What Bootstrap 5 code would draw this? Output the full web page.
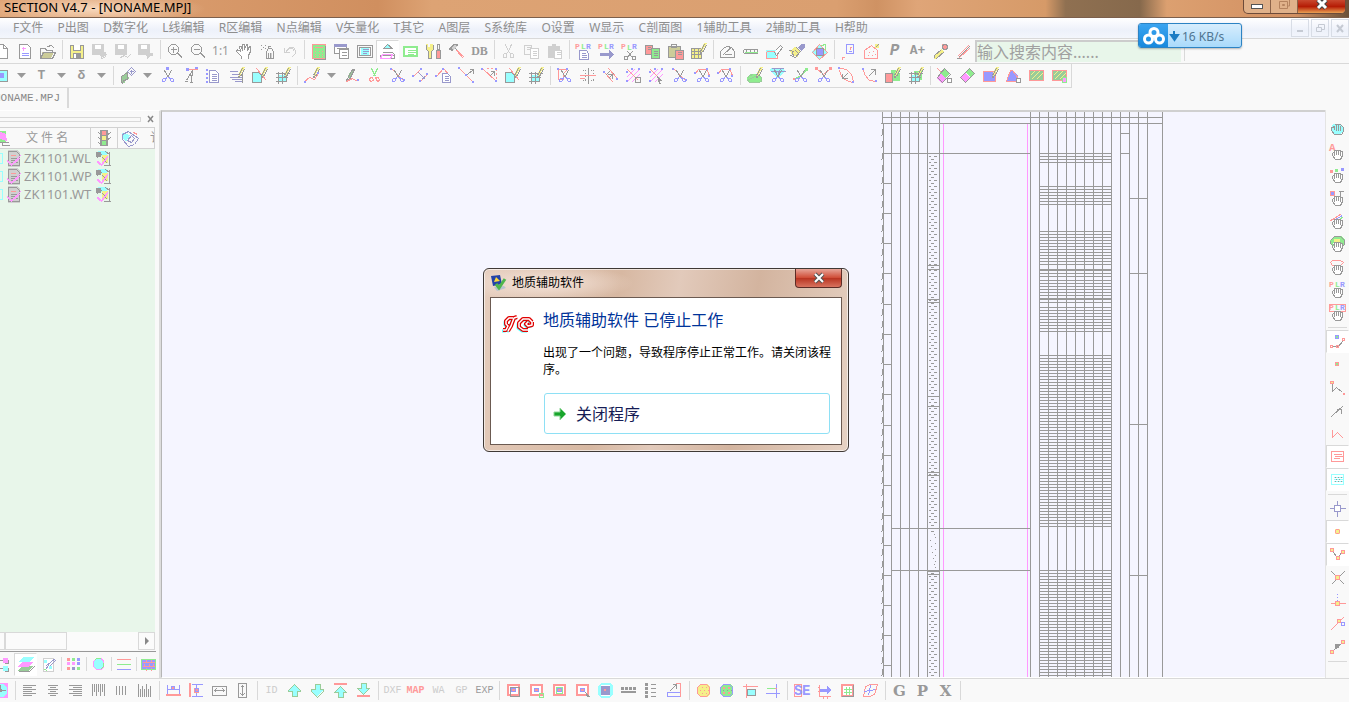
<!DOCTYPE html>
<html lang="zh-CN">
<head>
<meta charset="utf-8">
<meta name="viewport" content="width=device-width, initial-scale=1">
<title>SECTION V4.7 - [NONAME.MPJ]</title>
<link href="https://cdn.jsdelivr.net/npm/bootstrap@5.3.0/dist/css/bootstrap.min.css" rel="stylesheet">
<style>
:root{--line:#d9d9d9;--ink:#999;--face:#f9f9f9;--mint:#e8f6ea;--sheet:#f5f5ff}
body{font:12px/18px "Noto Sans","Noto Sans CJK SC",sans-serif;background:var(--face);color:var(--ink)}
button,input{font:inherit;color:inherit;border-radius:0}
button{border:0;background:none;padding:0}
.titlebar{height:18px;color:#000;border-bottom:1px solid #7c5f4c;
 background:radial-gradient(ellipse 110px 16px at 96px 9px,#ffe6cfcc,#ffe6cf00),linear-gradient(90deg,#e0a577,#d08f5f 28%,#dda374 32%,#da9f70 62%,#cf9263 65%,#dfa578 68%,#d69a68 77.5%,#8f7051 79%,#86694c 84.5%,#dca070 86.5%,#d29062 96%,#6b5139)}
.titlebar .caption{font-size:13px;line-height:14px;padding-left:4px}
.win-btns{height:14px;border:1px solid #6d4b3a;border-top:0;border-radius:0 0 5px 5px;overflow:hidden;margin-right:3px;background:#e0b18a}
.win-btns button{width:27px;display:flex;justify-content:center;border-right:1px solid #8c6349}
.win-btns .shut{width:47px;border:0;background:linear-gradient(#c9492f,#b51c05 50%,#e9a053)}
.menubar{height:20px;background:linear-gradient(#fff,#edf1fa 60%,#f3f6fc)}
.menubar .menu{width:868px;padding-left:13px;line-height:20px}
.menubar a{color:#8e8e8e;text-decoration:none;white-space:nowrap}
.child-btns{gap:2px}
.child-btns button{width:18px;height:18px;border:1px solid #d8dde6;display:flex;align-items:center;justify-content:center}
.strip{display:flex;align-items:center;height:24px;white-space:nowrap}
.strip-tall{height:25px}
.rule-top{border-top:1px solid var(--line)}
.pull{margin-left:-10px}
.tool{width:23px;height:23px;flex:none;display:flex;align-items:center;justify-content:center;line-height:20px}
.tool svg{overflow:visible}
.tool.on{background:#fff;border:1px solid var(--line);border-right-color:#fff;border-bottom-color:#fff}
.drop-arrow{width:17px;height:23px;flex:none;display:flex;align-items:center;justify-content:center}
.gap-bar{width:6px;height:19px;flex:none;background:linear-gradient(var(--line),var(--line)) center/1px 100% no-repeat}
.side .gap-bar{width:19px;height:6px;background:linear-gradient(var(--line),var(--line)) center/100% 1px no-repeat}
.t-serif{font:bold 12px/20px "Liberation Serif",serif}
.t-big{font:bold 15px/20px "DejaVu Serif",serif}
.t-mono{font:bold 13px/20px "Liberation Mono",monospace}
.t-slant{font:italic bold 16px/20px "Liberation Mono",monospace}
.t-tiny{font:10px/20px "Liberation Mono",monospace}
.t-faint{color:#ccc}.t-rose{color:#f99;font-weight:bold}
.finder{width:206px;height:22px;border:1px solid #ccc;border-width:2px 0 0 2px;background:var(--mint);font-size:16px;padding:0;outline:0}
.finder::placeholder{color:#a0a0a0;opacity:1}
.row-two{width:1082px;border-bottom:1px solid var(--line);border-right:1px solid var(--line)}
.tab-row{height:22px}
.doc-tab{font:11px/21px "Liberation Mono",monospace;height:20px;border-right:2px solid var(--line);padding-right:7px;margin-left:-6px;color:#888}
.files{width:161px;border-top:1px solid #fff;border-right:2px solid #ddd}
.files-head{height:16px;width:156px}
.grip{width:141px;height:5px;border:1px solid var(--line);border-left:0}
.file-grid{table-layout:fixed;width:155px;margin:0;border-collapse:collapse}
.file-grid th{height:21px;padding:0;border:1px solid #d2d2d2;border-left:0;font-weight:400;overflow:hidden;text-align:center}
.file-grid td{height:18px;padding:0;white-space:nowrap;overflow:hidden}
.file-name{width:72px;font-size:13px;padding-left:1px}
.row-flag{width:3px;height:11px;border:1px solid #9ff;border-left:0;margin-right:3px}
.file-list{background:var(--mint);width:155px}
.hbar{height:18px;width:155px;background:#fbfbfb}
.hbar .thumb{width:62px;border:1px solid var(--line)}
.hbar .start{width:5px;border:1px solid var(--line);border-left:0}
.hbar button{width:17px;border:1px solid var(--line);display:flex;align-items:center;justify-content:center}
.pane-tabs{height:25px;border-top:1px solid var(--ink);margin:1px 3px 2px -9px}
.pane-tabs .gap-bar{width:2px;height:14px}
.sheet{background:var(--sheet);border-top:2px solid #d0d0d0;border-left:1px solid #b5b5b5;border-bottom:1px solid #fff}
.sheet svg{width:290px;height:567px;margin-right:155px;flex:none}
.side{width:24px;padding:7px 1px 0 0;border-left:1px solid #e4e4e4}
.net-pill{left:1138px;top:23px;width:104px;height:25px;border:1px solid #2c83c4;border-radius:3px;background:linear-gradient(#d7edfd,#a9dafb);color:#4f7591;box-shadow:0 1px 2px #0004;overflow:hidden;line-height:26px}
.net-pill .mark-box{width:29px;background:linear-gradient(#3ba4f0,#1789dd)}
.crash{left:483px;top:268px;width:366px;border:1px solid #3f3936;border-radius:6px;padding:0 6px 6px;color:#000;box-shadow:inset 0 0 0 1px #fff9;
 background:radial-gradient(ellipse 90px 18px at 60px 14px,#f5e4da,#f5e4da00),linear-gradient(100deg,#e5cdbd,#d7b8a2 35%,#e2cabb 50%,#d3b49f 70%,#e6d2c4)}
.crash header{height:28px;padding-left:1px}
.crash .shut{width:47px;height:19px;border:1px solid #5c2c26;border-top:0;border-radius:0 0 4px 4px;background:linear-gradient(#e7a598,#cf4a34 50%,#b93522 52%,#d8735f);display:flex;align-items:center;justify-content:center}
.crash .inner{background:#fff;border:1px solid #6b5a51;height:148px;padding:10px 8px 0 10px}
.crash h1{font-size:16px;line-height:24px;color:#039;margin:0 0 12px}
.crash p{line-height:17px;margin:0 0 15px}
.crash .answer{height:41px;width:286px;border:1px solid #8ee0f5;border-radius:3px;font-size:16px;color:#151c55;gap:8px;padding-left:7px;margin-left:1px}
</style>
</head>
<body class="vh-100 d-flex flex-column overflow-hidden position-relative">

<header class="titlebar d-flex justify-content-between flex-shrink-0">
  <div class="caption">SECTION V4.7 - [NONAME.MPJ]</div>
  <div class="win-btns d-flex">
    <button aria-label="最小化"><svg width="14" height="11"><rect x="1.500" y="4.500" width="11" height="4" fill="#fff" stroke="#555"/></svg></button>
    <button aria-label="还原"><svg width="12" height="11"><path d="M3.500 0v-2h8v8h-2M1.500 1.500h8v7h-8zM4.500 4.500h2v1h-2z" fill="none" stroke="#b5835f"/></svg></button>
    <button class="shut" aria-label="关闭"><svg width="14" height="11"><path d="M3 0l8 8M11 0L3 8" stroke="#444" stroke-width="5"/><path d="M3 0l8 8M11 0L3 8" stroke="#fff" stroke-width="3"/></svg></button>
  </div>
</header>

<nav class="menubar d-flex flex-shrink-0 align-items-center justify-content-between">
  <div class="menu d-flex justify-content-between">
    <a href="#">F文件</a><a href="#">P出图</a><a href="#">D数字化</a><a href="#">L线编辑</a><a href="#">R区编辑</a><a href="#">N点编辑</a><a href="#">V矢量化</a><a href="#">T其它</a><a href="#">A图层</a><a href="#">S系统库</a><a href="#">O设置</a><a href="#">W显示</a><a href="#">C剖面图</a><a href="#">1辅助工具</a><a href="#">2辅助工具</a><a href="#">H帮助</a>
  </div>
  <div class="child-btns d-flex">
    <button aria-label="最小化子窗口"><svg width="9" height="9"><path d="M1 7h6" stroke="#c5cad3" stroke-width="2"/></svg></button>
    <button aria-label="还原子窗口"><svg width="9" height="9"><path d="M2.500 3V.5h6v5H6M.5 3.500h5v4h-5z" fill="none" stroke="#c5cad3"/></svg></button>
    <button aria-label="关闭子窗口"><svg width="9" height="9"><path d="M1 1l6 7M7 1L1 8" stroke="#c5cad3" stroke-width="2"/></svg></button>
  </div>
</nav>

<div class="strip strip-tall rule-top flex-shrink-0">
  <div class="d-flex pull" data-tools="new page open | save saveA saveB saveC | zin zout #t-fit:1:1 hand spray undo | calc wins screen !picture card tools hammer #t-big2:DB | cut copy paste | plrpage plrarrow plrcut copyc pastec gridpen | prot ruler eraser brush diamond | pt house #t-slant:P #t-mono:A+ pin pen"></div>
  <input class="finder" type="text" aria-label="搜索" placeholder="输入搜索内容......">
  <span class="gap-bar"></span>
</div>
<div class="rule-top flex-shrink-0">
  <div class="strip row-two pull" data-tools="sq v #t-mono:T v #t-mono:δ v | leaf v nodecut nodeline list textpen mappen netpen | curve v pen2 cutg cutline linea linepage linex liney mappen netpen | polycut mirror ladder hatch1 hatch2 cutline cutarc cutarc | blob gem cuty cutv arc1 arrowl blobpen netg | dia1 dia2 rectpen trisq hat hatsel"></div>
</div>
<div class="tab-row d-flex flex-shrink-0"><div class="doc-tab">NONAME.MPJ</div></div>

<main class="d-flex flex-grow-1" style="min-height:0">
  <aside class="files d-flex flex-column flex-shrink-0">
    <div class="files-head d-flex align-items-center justify-content-between">
      <div class="grip"></div>
      <button aria-label="关闭面板"><svg class="d-block" width="9" height="8"><path d="M1 1l5 6M6 1L1 7" stroke="#888" stroke-width="1.500"/></svg></button>
    </div>
    <div class="file-list d-flex flex-column flex-grow-1">
      <table class="file-grid">
        <colgroup><col style="width:90px"><col style="width:27px"><col></colgroup>
        <thead style="background:var(--face)"><tr>
          <th><div class="d-flex" style="margin-left:-5px"><span data-icon="layer"></span><span style="padding-left:14px">文 件 名</span></div></th>
          <th><span data-icon="light"></span></th>
          <th><div class="d-flex justify-content-between ps-1"><span data-icon="disk"></span><span style="width:4px;overflow:hidden">讠</span></div></th>
        </tr></thead>
        <tbody id="rows"></tbody>
      </table>
    </div>
    <div class="hbar d-flex">
      <span class="start"></span><span class="thumb me-auto"></span>
      <button aria-label="向右滚动"><svg width="6" height="8"><path d="M1 0l4 4-4 4z" fill="#888"/></svg></button>
    </div>
    <div class="pane-tabs d-flex align-items-center" data-tools="tree !stack note | colors | circ | lines3 | brick"></div>
  </aside>
  <section class="sheet d-flex flex-grow-1 justify-content-end overflow-hidden">
    <svg id="column" viewBox="880 112 290 567" shape-rendering="crispEdges" role="img" aria-label="钻孔柱状图"></svg>
  </section>
  <nav class="side d-flex flex-column align-items-center flex-shrink-0 overflow-hidden" data-tools="grab grabA grabdots grabT grablines grabblob grabring grabplr grabplrbox | !snap1 dot zig arrow zig2 !txtbox !cybox | cross !ptdot !vee ex perp tang mid |"></nav>
</main>

<footer class="strip rule-top flex-shrink-0" style="margin-left:-11px" data-tools="mag | al ac ar bars1 bars2 bars3 | fitw fith stw sth | #t-tiny t-faint:ID up down top bottom | #t-tiny t-faint:DXF #t-tiny t-rose:MAP #t-tiny t-faint:WA #t-tiny t-faint:GP #t-tiny:EXP | b1 b2 b3 b4 b5 dashes rows tri | wheel1 wheel2 crop tee | se axis frame warp | #t-big:G #t-big:P #t-big:X |"></footer>

<div class="net-pill position-absolute d-flex">
  <div class="mark-box d-flex align-items-center justify-content-center"><svg width="22" height="18" fill="none" stroke="#fff" stroke-width="3"><circle cx="11" cy="5.500" r="4"/><circle cx="5.500" cy="12" r="4"/><circle cx="16.500" cy="12" r="4"/></svg></div>
  <svg width="14" height="23"><path d="M6 7v6M3 11h7l-3.500 5z" fill="#1a7cc4" stroke="#1a7cc4" stroke-width="2"/></svg><span>16 KB/s</span>
</div>

<div class="crash position-absolute" role="dialog" aria-labelledby="crash-name">
  <header class="d-flex justify-content-between">
    <div class="d-flex align-items-center gap-1">
      <svg width="17" height="16"><path d="M0 1l9-1 2 9-9 2z" fill="#2444a8"/><path d="M3 7l2-5 4 4z" fill="#ffd83d"/><path d="M3 12l10-1 2 2-9 3z" fill="#b7c3cf"/><path d="M5 9l3 4 6-9" fill="none" stroke="#4fb64d" stroke-width="3"/></svg>
      <span id="crash-name">地质辅助软件</span>
    </div>
    <button class="shut" aria-label="关闭对话框"><svg width="14" height="12"><path d="M3 2l8 8M11 2l-8 8" stroke="#555" stroke-width="4"/><path d="M3 2l8 8M11 2l-8 8" stroke="#fff" stroke-width="2"/></svg></button>
  </header>
  <div class="inner d-flex">
    <svg class="flex-shrink-0" width="34" height="34" fill="none" stroke-linejoin="round">
      <defs><path id="swirl" d="M12 10H8L5 13v3l2 2-2 4H2M16 9l-3 1-3 8-3 5M31 14l-3-3h-6l-4 4v4l4 3h5M31 14v3l-4 1-2-2 2-2"/></defs>
      <use href="#swirl" x="-1" y="1" stroke="#5ff" stroke-width="3"/>
      <use href="#swirl" stroke="#e00000" stroke-width="4"/>
      <use href="#swirl" stroke="#fff" stroke-width="1.500"/>
    </svg>
    <div class="ps-2">
      <h1 class="fw-normal">地质辅助软件 已停止工作</h1>
      <p>出现了一个问题，导致程序停止正常工作。请关闭该程序。</p>
      <button class="answer d-flex align-items-center"><svg width="16" height="16"><path d="M2 6h6V2l6 6-6 6v-4H2z" fill="#19a52c" stroke="#8fd797"/></svg>关闭程序</button>
    </div>
  </div>
</div>

<script src="https://cdn.jsdelivr.net/npm/bootstrap@5.3.0/dist/js/bootstrap.bundle.min.js"></script>
<script>
// Icon parts: mode (s stroke, f fill, t letter, @ include) + colour + path data on a 17px grid
const hue={k:'#999',r:'#f99',g:'#8fec8f',b:'#99f',c:'#9ff',m:'#f9f',y:'#f5f08a',l:'#d0d0d0',w:'#fff',n:'#99c',d:'#9c9',o:'#cc9'};
const icons={
sciss:'sk M5 3L9 10M12 3L8 10;sb M8 10l-2 1M9 10l2 1M4 11h2v2l-1 1h-2v-2zM11 11h2l1 1v2h-2l-1-1z',
penc:'fy M10 8l4-8h3l-5 9z;sk M10 8l4-7M12 9l4-7M10 8v2l2-1',
doc:'fw M4 3h7l3 3v9h-10z;sn M4 3h6l3 3v9h-9zM6 7h5M6 9h5M6 11h5M6 13h5',
palm:'fw M4 8h9v5l-2 4h-5z;sk M5 9v3M3 9h2M3 9v3l3 4h5l2-4V8h-2v4M5 11V7h2v4M7 7h2v4M9 7h2v4',
new:'fw M3 1h8l3 3v12h-11z;sk M3 1h7l4 4v10h-11zM10 1v4h4',
page:'fw M4 1h8l3 3v12h-11z;sk M3 1h8l3 3v11h-11z;sm M5 5h4M7 3v4;sb M5 10h7M5 12h7',
open:'fo M3 9h12l-3 6h-10z;sk M1 14V5h5l1 2h6v2M1 15l3-6h12l-3 6zM8 3l4-1 3 3',
save:'fy M2 2h13v13h-13z;sk M2 2h13v13h-13zM5 2v5h7V2;fw M6 2h6v5h-6z;fk M5 10h8v5h-8z;fw M6 11h2v4h-2z',
saveA:'fl M1 1h12v11h-12zM9 10l6-1 1 3-6 3z;fw M4 2h6v4h-6z;sl M10 15l5-2',
saveB:'fl M1 1h12v11h-12z;fw M4 2h6v4h-6z;sl M6 14l4-2 3 2 3-3',
saveC:'fl M1 1h12v11h-12zM9 10h7v3h-3l-3 3z;fw M4 2h6v4h-6z',
zin:'sk M5 1h4l3 3v4l-3 3h-4l-3-3V4zM4 6h6M7 3v6M11 10l5 5M12 10l4 4',
zout:'sk M5 1h4l3 3v4l-3 3h-4l-3-3V4zM4 6h6M11 10l5 5M12 10l4 4',
hand:'fw M3 8l2-6 8-1 2 5-2 6v4h-7z;sk M6 15v-2l-5-5 1-2 3 2-1-5h2l1 4V1h2v5l2-5h1v6l2-4h1v5l-2 4v3',
spray:'sk M8 8l2-3h3l2 3v7h-7zM10 5V3h2M2 2h1M4 4h1M2 6h1M6 2h1M6 5h1M10 9v5M12 9v5;sl M13 9v5',
undo:'sl M3 4v5h5M4 8l4-4h4l2 3v3l-4 4M4 9l4-4h3l2 3',
calc:'fg M2 1h13v15h-13z;sr M2 1h13v14h-13zM4 4h8M4 8h1M8 8h1M11 8h1M4 11h1M8 11h1M11 11h1M4 13h1M8 13h1M11 13h1;sk M15 2v14h-12',
wins:'fw M2 2h12v8h-12z;sk M1 1h12v9h-12zM3 5h12v8;fw M6 6h10v9h-10z;sk M6 6h9v9h-9zM8 9h5M8 12h5;fn M1 1h13v3h-13z',
screen:'sk M1 2h15v12h-15zM3 4h11v8h-11z;fc M5 5h8v7h-8z;sn M6 6h6M6 8h6M6 10h4',
picture:'fc M5 5l4-4 4 4z;sk M4 5l4-4 5 4zM3 9h10l3 3M1 12h14v3H1z;sm M3 11h10l-2 4H1z',
card:'fg M1 3h15v11h-15z;fw M3 5h11v7h-11z;sg M5 7h8M5 9h8M5 11h6',
tools:'fy M1 1h2v3h2V1h3v5l-2 2v7h-3V8l-2-2z;sk M1 1v5l2 2v7h3V8l2-2V1M12 1h2v5h-2z;fr M11 7h4v9h-4z;sk M11 7h4v8h-4z',
hammer:'fk M0 6l6-5h4v2l-2 1-4 4z;fl M3 5l4-3 2 1-4 4z;sk M7 5l8 8;sr M8 7l7 8M9 7l7 7',
cut:'sl M5 1l4 9M11 1L7 10M4 10h2v4h-3v-3zM10 10h2l1 1v3h-3z',
copy:'sl M1 2h7v9h-7zM3 4h4M3 6h4;fw M7 5h8v10h-8z;sl M7 5h8v10h-8zM9 8h4M9 10h4M9 12h4',
paste:'fl M2 3h12v12h-12zM6 1h4v3h-4z;fw M8 7h7v8h-7z;sl M8 7h7v8h-7zM10 9h4M10 11h4',
plr:'tr 0 6 P;tg 6 6 L;tb 11 6 R',
plrpage:'@plr;fw M5 7h6l3 3v7h-9z;sn M4 7h7l2 3v6h-9zM6 10h4M6 12h5M6 14h5',
plrarrow:'@plr;fn M2 10h9v-3l5 5-5 4v-3h-9z',
plrcut:'tr 0 6 P;tg 6 7 L;tb 11 6 R;sk M6 8l5 6M11 8l-5 6M3 13h3v3h-3zM11 13h3v3h-3z',
copyc:'fr M1 2h7v9h-7z;sk M1 2h7v9h-7zM3 4h3M3 6h3;fg M7 5h9v10h-9z;sk M7 5h8v10h-8zM9 8h4M9 10h4M9 12h4',
pastec:'fo M1 3h12v11h-12z;sk M1 3h12v11h-12zM4 1h5v3h-5z;fr M8 7h8v9h-8z;sk M8 7h8v9h-8zM10 9h4M10 11h4',
gridpen:'fy M1 5h10v10h-10z;sk M1 5h10v10h-10zM1 8h10M1 11h10M4 5v10M8 5v10;@penc',
prot:'sk M1 12v-4l4-4 3-1 4 1 3 4v6h-14zM4 11l9-8M5 11h7',
ruler:'sk M1 6h14M1 6v3M4 6v2M8 6v2M12 6v2M15 6v3M1 10h14;sg M2 9h13',
eraser:'fc M1 7h10v8h-10z;sr M1 8v7h11v-6M1 8h8;sk M9 9l6-7 2 2-6 8z;fw M10 9l4-5 2 1-4 6z',
brush:'fy M2 8l5-4 5 4-2 6-5-1z;sk M1 7l5 1M2 12l5 2 5-6M4 9l1 4M7 7l3 3;fn M10 4l3-3h4v3l-4 4z;sk M8 4l5 5',
diamond:'fc M8 1l8 8-8 8-8-8z;sr M8 1l8 8-8 7-7-7z;fb M5 5h7v7h-7z;sk M5 5h7v7h-7z;sg M10 2l4-1v5',
pt:'sb M6 1h7v9h-7zM8 8h3;sr M9 4h2M10 3v3M1 14h3M2 13v3',
house:'sr M1 7l7-5 6 5v8h-13z;sr M5 9h1M9 8h1M4 12h1M8 12h1M11 11h1;fy M12 1h4v4h-4z;sk M12 4l3-3',
pin:'fr M10 1h5v5h-5z;sk M10 2l2-1h2l1 2v2l-2 1h-2l-1-2z;fy M3 12l6-6 3 2-7 7-3 1z;sk M2 14v-2l7-6M3 15h1l8-7',
pen:'sk M3 14L14 3M1 15h5;sr M2 13L13 2M4 14L15 4',
sq:'fc M3 3h11v11h-11z;sk M3 3h11v11h-11z;fb M6 6h5v5h-5z',
v:'',
leaf:'fd M2 15l0-5 6-5 2 7-4 1v3z;sk M2 15v-6l6-4 0 7-4 1-1 3z;sn M12 0l4 4-4 4-4-4zM10 4h4M12 2v4',
nodecut:'fb M7 0h3v3h-3z;@sciss',
nodeline:'fb M4 1h3v3h-3zM13 0h3v3h-3z;sr M6 2h9;sk M10 3L4 13M10 3l-1 12M6 8h3M2 14h3M7 15h3',
list:'fb M1 2h2v2h-2zM1 6h2v2h-2zM1 10h2v2h-2zM1 14h2v2h-2z;@doc',
textpen:'sn M1 4h8M3 7h7M1 10h12M3 12h10M6 14h8;@penc;sk M14 5v10',
mappen:'fc M1 5h6l4 4v7h-10z;sk M1 5h6l3 3v7h-9z;sr M5 1l10 12;@penc',
netpen:'fc M4 8h9v7h-9z;sk M1 6h14M1 10h12M1 14h11M4 4v12M8 4v12M12 6v8;@penc',
curve:'sr M1 14l5-4 5 2 4-6;@penc;fb M1 14h2v2h-2zM14 5h2v2h-2z',
pen2:'fd M5 9l4-7h3l-5 10z;sk M3 13l6-11h2L6 12z;sr M3 14l6-3 5 3;fb M14 12h2v2h-2z',
cutg:'sg M5 1l4 8M11 1L7 9;sr M4 10h2l1 3-3 1-1-2zM9 10h3l1 3-2 1z',
cutline:'sr M2 1l13 13;fb M1 1h2v2h-2zM14 12h2v2h-2z;@sciss',
linea:'sr M1 9l7-7M8 14l7-7;sn M6 5l6 6M9 11h3V8;fb M0 8h2v2h-2zM8 1h2v2h-2zM7 13h2v2h-2zM14 6h2v2h-2z',
linepage:'sr M1 9l7-8 6 7;fb M0 8h2v2h-2zM7 1h2v2h-2z;fw M7 6h6l3 3v7h-9z;sn M7 6h5l3 3v6h-8zM9 9h4M9 11h4M9 13h4',
linex:'sr M1 1l14 14;fb M0 0h2v2h-2zM14 14h2v2h-2zM7 7h2v2h-2z;sk M9 7l6-5M11 2h4v4',
liney:'sr M1 1l14 13M15 1v2M15 5v2M15 9v2M5 1h2M9 1h2;fb M0 1h2v2h-2zM14 13h2v2h-2zM14 1h2v2h-2z;sk M8 9l5-5M9 4h4v4',
polycut:'sr M2 2h9l-4 4v6h-5z;fb M1 1h2v2h-2zM10 1h2v2h-2z;@sciss',
mirror:'sk M9 0v16M3 3h1M5 3h1M11 3h1M13 3h1M3 13h1M5 13h1M11 13h1M13 13h1M6 5v1M6 8v1M6 11v1M14 5v1M14 11v1;sr M0 8h16M0 11h5',
ladder:'sr M2 5l9 10M6 1l9 10;sk M3 8l4-4M6 11l5-5M5 7h5v4;fb M1 4h2v2h-2zM14 11h2v2h-2z',
hatch1:'sm M1 10l8-8M2 14L14 2M6 15l8-8;sr M2 2l11 11;fb M1 4h2v2h-2zM6 1h2v2h-2zM13 1h2v2h-2zM1 13h2v2h-2z;sk M10 10h5v5h-5z',
hatch2:'sm M1 10l8-8M2 14L14 2M6 15l8-8;sr M2 2l11 11;fb M1 4h2v2h-2zM6 1h2v2h-2zM13 1h2v2h-2zM1 13h2v2h-2z;fk M9 9l6 5h-3l1 3-2 0z',
cutarc:'sr M1 6l3-4h8l2 3 1 4;fb M0 5h2v2h-2zM12 1h2v2h-2zM14 8h2v2h-2z;@sciss',
blob:'fg M1 14v-4l4-3h7l4 3v4l-3 1h-10z;sd M1 11l2-3 4-1M12 7l3 3v4l-3 1h-9l-2-2z;@penc',
gem:'fc M2 1h13l1 3-7 7-8-7z;sn M2 1h12M1 4h15M5 1l3 8M11 1L8 9;@sciss',
cuty:'sg M1 12l6-3 8-7;fr M1 11h2v2h-2z;fg M13 1h3v3h-3z;@sciss',
cutv:'sr M1 1l7 6 7-6;fr M0 0h3v3h-3zM14 0h3v3h-3z;@sciss',
arc1:'sr M2 1l6 1 5 5 2 7M1 3l2 6 5 4 6 2;fb M0 0h2v2h-2zM14 14h2v2h-2z;sk M4 11l5-5M4 6v5h5',
arrowl:'sr M2 2l1 5 5 6 7 1;fb M1 1h2v2h-2zM14 13h2v2h-2z;sk M7 9l7-7M9 2h5v5',
blobpen:'fg M7 3h7l2 4v7h-8z;fr M1 6h7v10h-7z;sk M1 6h7v9h-7z;@penc',
netg:'fg M7 4h8v9h-8z;@netpen',
dia1:'fg M8 1l6 6-5 4-5-5z;fm M4 6l6 5-4 5-5-4z;sk M8 1l6 6-8 8-5-5z;sr M1 1l4 4;fw M11 11h5v5h-5z;sk M11 11h4v4h-4z',
dia2:'fg M10 1l5 5-4 4-5-5z;fm M6 6l5 5-4 5-6-5z;sk M10 1l5 5-9 9-5-5z',
rectpen:'fb M1 4h13v11h-13z;sr M1 4h12v10h-12z;@penc',
trisq:'fb M2 14l2-9 4-2 5 6v5z;sr M1 14l4-11h2l6 8v3z;fw M11 11h5v5h-5z;sk M11 11h4v4h-4z',
hat:'fn M2 4h14v9h-14z;fd M2 4h13v9h-13z;sy M2 8l4-4M3 12l8-8M8 12l7-7;sr M1 3h14v10h-14z',
hatsel:'@hat;fm M11 10h4v6h-4z;sg M11 10h4v5h-4z',
layer:'fg M3 1h8v11h-8z;fm M5 2l6 2 1 7-7-2z;sk M4 12h9M7 12v3h7M3 1v11',
light:'fk M5 0h8v16h-8z;fk M2 2l3 1v2zM2 7l3 1v2zM2 12l3 1v2zM16 2l-3 1v2zM16 7l-3 1v2z;fr M7 1h4v4h-4z;fy M7 6h4v4h-4z;fg M7 11h4v4h-4z',
disk:'fc M0 3l8 2-4 7-4-4z;sn M0 4l6-3 10 7-4 6-6 2-6-7zM9 5l3 3-3 4-4-2z;sr M11 2l4 2',
doccheck:'fl M2 0h9l3 3v14h-12z;sk M2 1h8l3 3v11h-11zM4 8h7M4 10h7M4 12h7;sr M4 5h5;sm M1 11l4 4L14 7M1 10l4 4 9-9',
gearcheck:'fc M3 1h9v5h-9z;fk M1 2h5v5h-5z;fy M7 5h6v8h-6z;sk M10 1l4 3M14 1v13M7 7l5 6M8 15h7M2 7l5-4;sm M2 11l4 4 6-8M2 12l4 3M3 11l3 3 6-8',
tree:'sk M3 2v12M3 4h5M3 12h5;fm M9 2h5v5h-5z;fc M9 10h5v5h-5z;sk M14 3v4h-4M14 11v4h-4',
stack:'fd M1 15l4-5h11l-4 5z;sk M1 15h11l5-5;fm M1 10l4-4h11l-4 5h-11z;fc M2 5l4-4h11l-5 5h-11z',
note:'fw M3 2h10v13h-10z;sl M3 2h10v13h-10z;fc M4 4h3v3h-3zM9 10h3v3h-3z;sn M6 9l9-7M5 13l3-4M9 10l6-6;sg M4 13l3 1',
colors:'fr M2 2h3v3h-3zM2 6h3v3h-3z;fg M7 2h3v3h-3z;fb M12 2h3v3h-3z;fm M2 6h3v3h-3zM7 6h3v3h-3z;fb M12 6h3v3h-3z;fr M2 11h3v3h-3z;fn M7 11h3v3h-3z;fg M12 11h3v3h-3z',
circ:'fm M6 2h5l3 3v6l-3 3h-5l-3-3v-6z;fc M6 3h5l2 3v4l-2 3h-5l-2-3v-4z;sg M4 4l2-2h4M13 6v4l-3 3',
lines3:'sr M1 3h14;sg M1 8h14;sb M1 13h14',
brick:'fb M1 3h15v11h-15z;sr M2 6h13M2 10h13M6 3v3M11 3v3M4 7v3M9 7v3M13 7v3M6 11v3M11 11v3;sg M1 3h14v10h-14z',
grab:'fc M4 4h7l3 3v5l-3 2h-7l-2-4z;sk M5 4h6l3 3v4l-2 3h-7l-3-4V7h2V5M5 5v4M7 4v6M9 4v6M11 5v5',
grabA:'tR 0 8 A;@palm',
grabdots:'fr M1 4h3v3h-3z;fg M6 3h3v3h-3z;fb M12 2h3v3h-3z;@palm',
grabT:'fb M1 2h5v5h-5z;sr M1 2h4v4h-4z;sk M9 2h5M11 2v5;@palm',
grablines:'sr M1 8l4-2 7-5;sb M4 8l9-5;sg M9 8l5-4;@palm',
grabblob:'fg M1 5l4-4h7l4 4v4l-4 3h-7l-4-4z;sk M1 5l4-4h6l4 4v4l-3 2M1 5v3l3 3;fy M5 4h6v3h-6z;@palm',
grabring:'sr M3 2h8l3 2-3 3h-8l-2-3z;@palm',
grabplr:'@plr;@palm',grabplrbox:'sr M0 0h16v7h-16z;@plr;@palm',
snap1:'sk M3 13h6l5-6;fg M6 2h4v4h-4z;sb M6 2h3v3h-3z;sr M1 12h2v2h-2zM7 12h2v2h-2zM13 5h2v2h-2z',
dot:'fg M6 6h4v4h-4z;sr M6 6h3v3h-3z',
zig:'sk M3 3v9l4-4 6 5;fy M1 2h4v3h-4z;sr M1 2h3v2h-3zM14 14h1v1h-1z',
arrow:'sk M2 14L14 3M7 7h5v4M11 6l-3 2',
zig2:'sr M3 4v8l5-5 6 6',
txtbox:'fw M2 3h13v11h-13z;sr M2 3h12v10h-12zM4 6h8M5 8h8M4 10h6',
cybox:'sc M2 3h12v10h-12z;sc M4 6h9M4 8h9M4 10h9;sk M5 6h1M8 6h1M11 6h1M6 8h1M9 8h1M5 10h1M8 10h1M11 10h1',
cross:'fw M5 5h7v7h-7z;sn M5 5h6v6h-6zM8 0v5M8 11v5M0 8h5M11 8h5',
ptdot:'fy M6 6h5v5h-5z;sr M6 7l1-1h2l1 1v2l-1 1h-2l-1-1z',
vee:'sk M3 4l5 8 5-7;fy M1 2h3v3h-3zM7 10h3v3h-3zM13 4h3v3h-3z;sr M1 2h3v3h-3zM7 10h3v3h-3zM12 4h3v3h-3z',
ex:'sk M2 2l13 13M15 2L2 15;fy M6 6h4v4h-4z;sr M6 6h4v4h-4z',
perp:'sr M1 11h15;sb M8 1v1M8 4v1M8 7v1;fy M6 9h4v4h-4z;sr M6 9h4v4h-4z',
tang:'sr M1 15L14 2;fy M8 4h4v4h-4z;sr M8 4h3v3h-3z;sb M12 7h3v3h-3z',
mid:'sk M2 14L14 3;fy M1 12h4v4h-4zM12 2h4v4h-4z;sr M1 12h3v3h-3zM12 2h3v3h-3z;fk M6 6h4v4h-4z',
mag:'fm M1 1h15v15h-15z;fc M5 2h7l3 4v6l-4 3h-6l-3-4v-5z;sk M8 2v6M3 8h10;fk M7 7h3v3h-3z',
al:'sk M1 3h13M1 5h9M1 7h13M1 9h9M1 11h13M1 13h9',ac:'sk M3 3h10M5 5h6M3 7h10M5 9h6M3 11h10M5 13h6',ar:'sk M1 3h13M5 5h9M1 7h13M5 9h9M1 11h13M5 13h9',
bars1:'sk M2 1v12M4 1v8M6 1v12M8 1v8M10 1v12M12 1v8M14 1v12',bars2:'sk M3 3v9M6 3v9M9 3v9M12 3v9',bars3:'sk M2 1v13M4 6v8M6 3v11M8 6v8M10 1v13M12 6v8M14 3v11',
fitw:'sb M2 2v9M14 2v9M2 7h12;fr M6 4h4v4h-4z;sb M6 4h3v3h-3z;fr M1 12h15v2h-15z',fith:'sb M3 2h11M3 14h11M8 2v12;fr M1 1h2v14h-2zM6 6h5v5h-5z;sb M7 6h3v3h-3z',
stw:'sk M1 4h14v9h-14zM3 8h10M5 6l-2 2 2 2M11 6l2 2-2 2',sth:'sk M4 1h8v14h-8zM8 3v10M6 5l2-2 2 2M6 11l2 2 2-2',
up:'fc M8 2l6 7h-3v5h-5v-5h-4z;sd M8 2l6 6v1h-3v5h-5v-5h-4v-1z',down:'fc M6 3h5v5h3l-6 7-6-7h4z;sd M6 2h5v5h3v2l-6 6-6-6v-2h4z',
top:'fc M8 4l6 6h-3v5h-5v-5h-4z;sd M8 4l6 6h-3v5h-5v-5h-4z;fr M2 1h13v2h-13z',bottom:'fc M6 1h5v5h3l-6 7-6-7h4z;sd M6 1h5v5h3l-6 6-6-6h4z;fr M2 13h13v2h-13z',
b0:'fr M2 2h13v12h-13z;fw M4 4h9v8h-9z;fb M6 6h5v4h-5z;fr M7 7h3v2h-3z',
b1:'@b0;sk M5 5h9v9h-9z',b2:'@b0;sg M11 11h4v4h-4z',b3:'@b0;sg M5 5h6v6h-6z',b4:'@b0;fk M11 10l5 5h-3z',
b5:'fc M4 1h9l3 3v8l-4 4h-8l-3-4v-8z;fw M4 3h9v11h-9z;fn M4 4h9v9h-9z;fr M7 7h2v2h-2z',
dashes:'fk M1 5h3v3h-3zM5 5h3v3h-3zM9 5h3v3h-3zM13 5h3v3h-3zM1 9h15v2h-15z',
rows:'fk M2 1h3v3h-3zM2 5h3v3h-3zM2 9h3v3h-3zM2 13h3v3h-3z;sk M7 2h5M7 6h5M7 10h5M7 14h5',
tri:'sb M1 10h13v4h-13z;sk M3 9l7-7M6 2h4v4;sr M9 1h5v13',
wheel1:'fy M5 2h7l3 3v7l-3 3h-7l-3-3v-7z;sr M5 2h6l3 3v6l-3 3h-6l-3-3v-6zM6 5h1M10 5h1M4 8h1M8 8h1M12 8h1M6 11h1M10 11h1',
wheel2:'fg M5 2h7l3 3v7l-3 3h-7l-3-3v-7z;sb M5 2h6l3 3v6l-3 3h-6l-3-3v-6z;fr M5 5h2v2h-2zM10 5h2v2h-2zM5 10h2v2h-2zM10 10h2v2h-2z;sk M4 8h1M8 8h1M12 8h1',
crop:'sr M1 4h15M5 1v14;fc M6 7h8v6h-8z;sk M6 7h8v6h-8z',tee:'sg M2 6h8;sb M1 11h14M12 1v14;sr M10 6h2',
se:'sr M1 2h7v12h-7z;tS 1 13 S;tB 9 13 E',axis:'sr M3 2v12h11M1 5h2M1 9h2M7 14v2M11 14v2;fb M4 7h7v-3l4 4-4 4v-2h-7z',
frame:'fr M2 2h13v13h-13z;fw M4 4h9v9h-9z;sg M4 7h8M4 10h8M7 4v8M10 4v8;sk M2 14h12V2',
warp:'sr M3 4l5-2h7l-3 10-5 2H1z;sb M2 9l11-2M8 3l-2 10'
};
function parts(name){
  return (icons[name]||'').split(';').map(p=>{
    if(!p)return '';
    if(p[0]==='@')return parts(p.slice(1));
    const c=hue[p[1].toLowerCase()]||'#99f',d=p.slice(3);
    if(p[0]==='f')return `<path fill="${c}" d="${d}"/>`;
    if(p[0]==='s')return `<path fill="none" stroke="${c}" transform="translate(.5 .5)" d="${d}"/>`;
    const [x,y,ch]=d.split(' '),size=/[SB]/.test(p[1])?14:p[1]==='R'?11:8;
    return `<text x="${x}" y="${y}" font-family="Liberation Mono" font-weight="bold" font-size="${size}" fill="${c}">${ch}</text>`;
  }).join('');
}
const draw=n=>`<svg width="17" height="17" viewBox="0 0 17 17" shape-rendering="crispEdges" aria-hidden="true">${parts(n)}</svg>`;
document.querySelectorAll('[data-tools]').forEach(bar=>{
  const src=bar.dataset.tools.replace('t-big2','t-serif').replace(/#(t-\w+) (t-\w+):/g,'#$1,$2:');
  bar.insertAdjacentHTML('beforeend',src.split(' ').map(t=>{
    if(t==='|')return '<span class="gap-bar"></span>';
    if(t==='v')return '<button class="drop-arrow" aria-label="展开"><svg width="9" height="5"><path d="M0 0h9L4.500 5z" fill="#999"/></svg></button>';
    if(t[0]==='#'){const i=t.indexOf(':');return `<button class="tool ${t.slice(1,i).replace(',',' ')}">${t.slice(i+1)}</button>`}
    const on=t[0]==='!',n=on?t.slice(1):t;
    return `<button class="tool${on?' on':''}" aria-label="${n}">${draw(n)}</button>`;
  }).join(''));
});
document.querySelectorAll('[data-icon]').forEach(e=>e.innerHTML=draw(e.dataset.icon));
document.getElementById('rows').innerHTML=['ZK1101.WL','ZK1101.WP','ZK1101.WT'].map(f=>
 `<tr><td colspan="3"><div class="d-flex align-items-center"><span class="row-flag"></span>${draw('doccheck')}<span class="file-name">${f}</span>${draw('gearcheck')}</div></td></tr>`).join('');

// Borehole column: vertical rules, depth ticks, lithology pattern and sample grid
const rects=[];
const box=(x,y,w,h,c='#999')=>rects.push(`<rect x="${x}" y="${y}" width="${w}" height="${h}" fill="${c}"/>`);
box(882,111,1,12);box(883,123,1,555);
[891,900,909,918,927,939,1030,1039,1048,1057,1066,1075,1084,1093,1102,1111,1120,1129,1138,1147,1162].forEach(x=>box(x,111,1,567));
[943,1027].forEach(x=>box(x,123,1,555,'#f9f'));
[117,123].forEach(y=>box(882,y,281,1));
box(883,153,148,1);[528,570].forEach(y=>box(891,y,140,1));
[183,213,243,273,304,334,364,394,425,455,485,515,545,575,605,635,665].forEach(y=>box(883,y,8,1));
for(let y=123;y<678;y+=12){box(881,y,1,1);box(882,y+6,1,6);box(881,y+12,1,1)}
const bands=[[153,162],[186,204],[231,264],[273,276],[280,296],[302,302],[307,331],[355,527],[570,677]];
bands.forEach(([a,b])=>{for(let y=a;y<=b;y+=3)box(1039,y,73,1)});
[269,298].forEach(y=>box(1039,y,73,2));
for(let y=156;y<678;y+=6){
  if(y>528&&y<570){box(930+y%5,y,1,1);box(935,y+3,1,1);continue}
  box(929,y,2,1);box(934,y,3,1);box(931,y+3,3,1);
}
[265,269,299,302,396,406,472,475,571,574].forEach(y=>box(927,y,13,1));
[133,153].forEach(y=>box(1120,y,10,1));
[198,273,424,575].forEach(y=>box(1129,y,19,1));
document.getElementById('column').innerHTML=rects.join('');
</script>
</body>
</html>
